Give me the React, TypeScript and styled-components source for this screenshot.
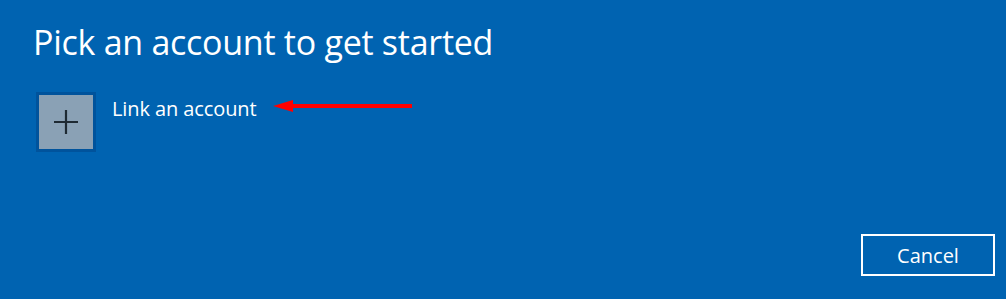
import { createGlobalStyle } from "styled-components";
import styled from "styled-components";

const GlobalStyle = createGlobalStyle`
  html, body {
    margin: 0;
    padding: 0;
    background: #0063b1;
  }
  body {
    font-family: "Open Sans", "Noto Sans", sans-serif;
  }
`;

const Page = styled.div`
  width: 1006px;
  height: 299px;
  box-sizing: border-box;
  padding: 22px 11px 23px 33px;
  display: flex;
  flex-direction: column;
  background: #0063b1;
  color: #fff;
`;

const Title = styled.h1`
  margin: 0;
  font-size: 34px;
  font-weight: 400;
  line-height: 40px;
  letter-spacing: -0.27px;
`;

const AccountRow = styled.div`
  display: flex;
  align-items: flex-start;
  gap: 16px;
  margin-top: 30px;
  margin-left: 3px;
`;

const Tile = styled.button`
  width: 60px;
  height: 60px;
  box-sizing: border-box;
  border: 3px solid #00539c;
  background: #8aa1b5;
  padding: 0;
  display: flex;
  align-items: center;
  justify-content: center;
`;

const LinkText = styled.span`
  font-size: 20px;
  line-height: 28px;
  margin-top: 3px;
  letter-spacing: -0.1px;
`;

const Arrow = styled.svg`
  margin-top: 8px;
  margin-left: 0;
`;

const Footer = styled.div`
  margin-top: auto;
  display: flex;
  justify-content: flex-end;
`;

const Button = styled.button`
  width: 134px;
  height: 42px;
  box-sizing: border-box;
  border: 2px solid #fff;
  background: transparent;
  color: #fff;
  font-family: "Open Sans", "Noto Sans", sans-serif;
  font-size: 20px;
  padding: 0;
`;

export default function App() {
  return (
    <>
      <GlobalStyle />
      <Page>
        <Title>Pick an account to get started</Title>
        <AccountRow>
          <Tile aria-label="Link an account">
            <svg width="24" height="24" viewBox="0 0 24 24">
              <path d="M0 12H24M12 0V24" stroke="#1e2a33" strokeWidth="2.2" />
            </svg>
          </Tile>
          <LinkText>Link an account</LinkText>
          <Arrow width="140" height="12" viewBox="0 0 140 12">
            <polygon points="0,6 20,0 20,12" fill="#ff0000" />
            <rect x="18" y="4" width="121" height="4" fill="#ff0000" />
          </Arrow>
        </AccountRow>
        <Footer>
          <Button>Cancel</Button>
        </Footer>
      </Page>
    </>
  );
}
